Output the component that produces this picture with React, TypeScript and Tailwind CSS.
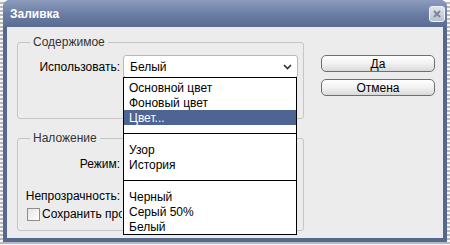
import React from 'react'

type Item = { label: string; kind?: 'item' | 'sep'; active?: boolean }

const fillItems: Item[] = [
    { label: 'Основной цвет' },
    { label: 'Фоновый цвет' },
    { label: 'Цвет...', active: true },
    { label: '', kind: 'sep' },
    { label: 'Узор' },
    { label: 'История' },
    { label: '', kind: 'sep' },
    { label: 'Черный' },
    { label: 'Серый 50%' },
    { label: 'Белый' },
]

function Chevron() {
    return (
        <svg width="9" height="6" viewBox="0 0 9 6">
            <path d="M1 1 L4.5 4.5 L8 1" fill="none" stroke="#333" strokeWidth="1.7" />
        </svg>
    )
}

function CloseButton() {
    return (
        <div className="w-[16px] h-[16px] rounded-[3px] border border-[#eef1f7] bg-gradient-to-b from-[#dfe3ec] to-[#b9c1d1] flex items-center justify-center">
            <svg width="10" height="10" viewBox="0 0 10 10">
                <path d="M2 2 L8 8 M8 2 L2 8" stroke="#7d8598" strokeWidth="2" />
            </svg>
        </div>
    )
}

function Legend({ children }: { children: React.ReactNode }) {
    return (
        <span className="-mt-[8px] ml-[12px] px-[3px] self-start h-[14px] leading-[14px] bg-[#ececec] text-[#333]">
            {children}
        </span>
    )
}

function DialogButton({ children }: { children: React.ReactNode }) {
    return (
        <div className="w-[114px] h-[17px] rounded-[5px] border border-[#6f6f6f] bg-gradient-to-b from-[#ffffff] via-[#f2f2f2] to-[#d9d9d9] flex items-center justify-center leading-none text-black">
            {children}
        </div>
    )
}

export default function App() {
    return (
        <div className="relative w-[450px] h-[245px] overflow-hidden font-['Liberation_Sans',Arial,sans-serif] text-[12px] text-black bg-[repeating-linear-gradient(180deg,#f6f6f6_0px,#f6f6f6_2px,#b9b9b9_2px,#b9b9b9_4px)]">
            <div className="ml-[3px] w-[444px] h-[242px] flex flex-col rounded-t-[7px] bg-[#56688d]">
                {/* title bar */}
                <div className="h-[27px] flex items-center justify-between pl-[7px] pr-[2px] rounded-t-[7px] bg-gradient-to-b from-[#8d9cbd] via-[#6b7ea4] to-[#5a6c92]">
                    <span className="font-bold text-white text-[12px]">Заливка</span>
                    <CloseButton />
                </div>

                {/* client area */}
                <div className="flex-1 mx-[4px] mb-[4px] bg-[#ececec] flex pl-[10px] pt-[15px]">
                    <div className="w-[287px] flex flex-col gap-[19px]">
                        <div className="h-[77px] border border-[#c6c6c6] rounded-[3px] flex flex-col">
                            <Legend>Содержимое</Legend>
                            <div className="mt-[6px] flex items-center">
                                <span className="w-[102px] text-right">Использовать:</span>
                                <div className="ml-[3px] w-[175px] h-[23px] border border-[#b9b9b9] rounded-[3px] bg-white flex items-center justify-between pl-[6px] pr-[5px]">
                                    <span>Белый</span>
                                    <Chevron />
                                </div>
                            </div>
                        </div>

                        <div className="h-[93px] border border-[#c6c6c6] rounded-[3px] flex flex-col">
                            <Legend>Наложение</Legend>
                            <div className="mt-[11px] h-[16px] flex items-center">
                                <span className="w-[102px] text-right">Режим:</span>
                            </div>
                            <div className="mt-[16px] h-[16px] flex items-center">
                                <span className="w-[102px] text-right">Непрозрачность:</span>
                            </div>
                            <div className="mt-[2px] h-[16px] flex items-center pl-[9px] gap-[2px]">
                                <span className="shrink-0 w-[13px] h-[13px] border border-[#8e8e8e] bg-gradient-to-br from-[#e6e6e6] to-white" />
                                {/* the open list covers the rest of this label */}
                                <span className="w-[80px] overflow-hidden whitespace-nowrap">Сохранить прозрачность</span>
                            </div>
                        </div>
                    </div>

                    <div className="ml-[17px] pt-[13px] flex flex-col gap-[7px]">
                        <DialogButton>Да</DialogButton>
                        <DialogButton>Отмена</DialogButton>
                    </div>
                </div>
            </div>

            {/* open dropdown list */}
            <div className="absolute left-[123px] top-[77px] w-[174px] pt-[2px] bg-white border border-black flex flex-col">
                {fillItems.map((it, i) =>
                    it.kind === 'sep' ? (
                        <div key={i} className="h-[17px] flex items-center">
                            <div className="h-px w-full bg-black" />
                        </div>
                    ) : (
                        <div
                            key={i}
                            className={
                                it.active
                                    ? 'h-[15px] flex items-center pl-[5px] bg-[#4e6492] text-white'
                                    : 'h-[15px] flex items-center pl-[5px]'
                            }
                        >
                            {it.label}
                        </div>
                    )
                )}
            </div>
        </div>
    )
}
